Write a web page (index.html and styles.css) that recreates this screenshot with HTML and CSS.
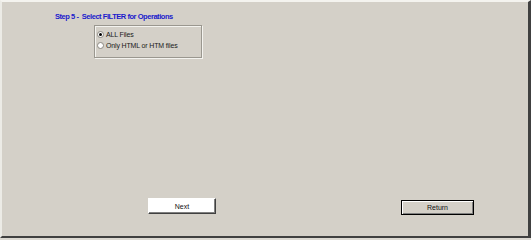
FILE: index.html
```html
<!DOCTYPE html>
<html>
<head>
<meta charset="utf-8">
<link rel="stylesheet" href="styles.css">
</head>
<body>
<div class="window">
  <div class="title">Step 5 -&nbsp; Select FILTER for Operations</div>
  <div class="group">
    <label class="opt"><span class="radio checked"></span>ALL Files</label>
    <label class="opt"><span class="radio"></span>Only HTML or HTM files</label>
  </div>
  <div class="spacer"></div>
  <div class="buttons">
    <div class="btn next">Next</div>
    <div class="btn ret">Return</div>
  </div>
</div>
</body>
</html>
```
FILE: styles.css
```css
html, body {
  margin: 0;
  padding: 0;
  background: #dcd9d2;
  height: 240px;
}
.window {
  width: 531px;
  height: 238px;
  box-sizing: border-box;
  background: #d4d0c8;
  border-top: 2px solid #f4f3ef;
  border-left: 2px solid #ecebe6;
  border-right: 3px solid #404040;
  border-bottom: 2px solid #404040;
  display: flex;
  flex-direction: column;
  font-family: "Liberation Sans", Arial, sans-serif;
  font-size: 8px;
  color: #000;
}
.title {
  margin: 10px 0 0 53px;
  font-weight: bold;
  color: #1a1acc;
  font-size: 7.5px;
  line-height: 10px;
  letter-spacing: -0.45px;
}
.group {
  margin: 3px 0 0 92px;
  width: 108px;
  height: 33px;
  border: 1px solid #9a978f;
  box-shadow: 1px 1px 0 #f4f3ef, inset 1px 1px 0 #f4f3ef;
  display: flex;
  flex-direction: column;
  padding: 3px 0 0 2px;
  box-sizing: border-box;
}
.opt {
  display: flex;
  align-items: center;
  height: 11px;
  line-height: 11px;
  font-size: 7px;
  letter-spacing: -0.15px;
  color: #1a1a1a;
}
.radio {
  width: 7px;
  height: 7px;
  border-radius: 50%;
  background: #fff;
  border: 1px solid #8a8780;
  box-sizing: border-box;
  margin-right: 2px;
  display: inline-flex;
  align-items: center;
  justify-content: center;
}
.radio.checked::after {
  content: "";
  width: 3px;
  height: 3px;
  border-radius: 50%;
  background: #000;
}
.spacer {
  flex: 1;
}
.buttons {
  display: flex;
  align-items: flex-start;
  margin: 0 0 21px 146px;
}
.btn {
  display: flex;
  align-items: center;
  justify-content: center;
  box-sizing: border-box;
  font-size: 7px;
  color: #111;
}
.next {
  width: 68px;
  height: 16px;
  background: #fff;
  border-top: 1px solid #fff;
  border-left: 1px solid #fff;
  border-right: 1px solid #404040;
  border-bottom: 1px solid #404040;
  box-shadow: inset -1px -1px 0 #808080;
}
.ret {
  margin: 2px 0 0 185px;
  width: 73px;
  height: 15px;
  background: #d4d0c8;
  border: 1px solid #000;
  box-shadow: inset 1px 1px 0 #fff, inset -1px -1px 0 #808080;
}
```
